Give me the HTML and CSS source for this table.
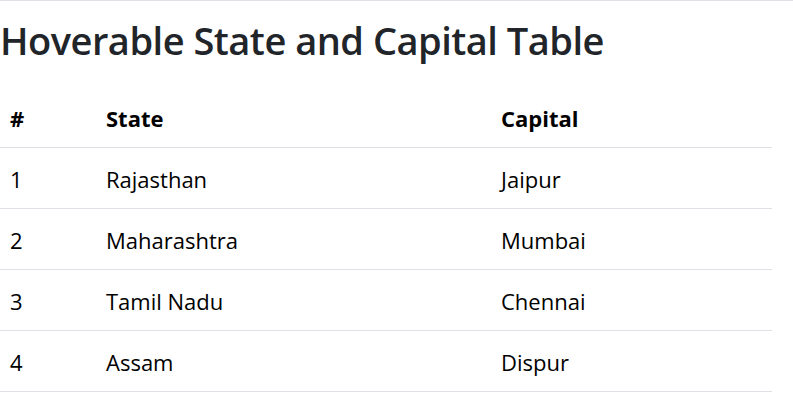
FILE: index.html
```html
<!DOCTYPE html>
<html>
<head>
<meta charset="utf-8">
<link rel="stylesheet" href="styles.css">
</head>
<body>
<div class="page">
  <h2 class="title">Hoverable State and Capital Table</h2>
  <table class="states">
    <thead>
      <tr><th class="c-num">#</th><th class="c-state">State</th><th class="c-cap">Capital</th></tr>
    </thead>
    <tbody>
      <tr><td>1</td><td>Rajasthan</td><td>Jaipur</td></tr>
      <tr><td>2</td><td>Maharashtra</td><td>Mumbai</td></tr>
      <tr><td>3</td><td>Tamil Nadu</td><td>Chennai</td></tr>
      <tr><td>4</td><td>Assam</td><td>Dispur</td></tr>
    </tbody>
  </table>
</div>
</body>
</html>
```
FILE: styles.css
```css
html, body {
  margin: 0;
  padding: 0;
  background: #fff;
}
body {
  font-family: "Open Sans", "Noto Sans", sans-serif;
  color: #000;
}
.page {
  border-top: 1px solid #dee2e6;
  padding-top: 15px;
}
.title {
  margin: 0 0 23px 0;
  font-size: 38px;
  line-height: 48px;
  font-weight: 600;
  letter-spacing: -0.5px;
  color: #212529;
}
.states {
  width: 772px;
  border-collapse: collapse;
  font-size: 22px;
  line-height: 36px;
}
.states th, .states td {
  padding: 13px 10px 11px 10px;
  text-align: left;
  border-bottom: 1px solid #dee2e6;
}
.states th {
  font-weight: 700;
}
.c-num { width: 76px; }
.c-state { width: 375px; }
```
